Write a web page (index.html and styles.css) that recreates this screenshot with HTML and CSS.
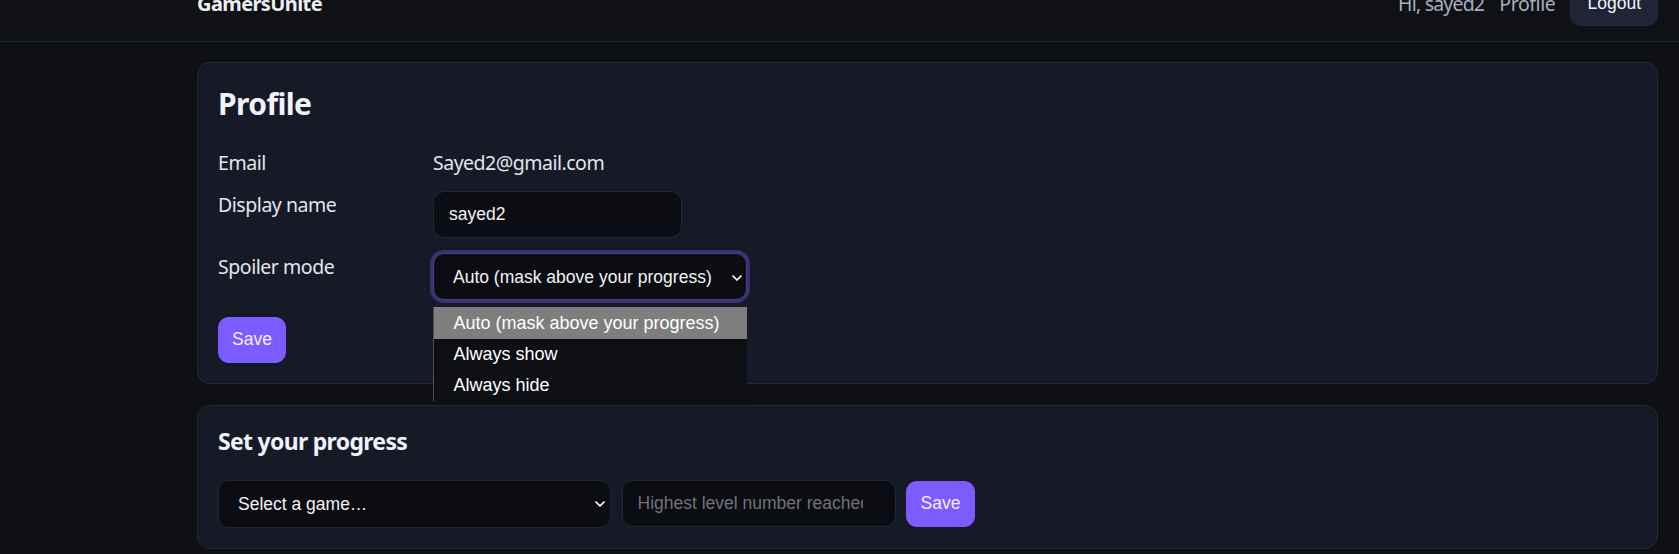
FILE: index.html
```html
<!DOCTYPE html>
<html lang="en">
<head>
<meta charset="utf-8">
<title>Profile – GamersUnite</title>
<link rel="stylesheet" href="styles.css">
</head>
<body>
<header class="topbar">
  <div class="topbar-inner">
    <span class="brand">GamersUnite</span>
    <nav class="nav">
      <span class="greet">Hi, sayed2</span>
      <a class="nav-link" href="#">Profile</a>
      <button class="btn-ghost" type="button">Logout</button>
    </nav>
  </div>
</header>
<main class="main">
  <section class="card profile-card">
    <h1 class="card-title">Profile</h1>
    <div class="form">
      <div class="row row-email">
        <span class="label">Email</span>
        <span class="value">Sayed2@gmail.com</span>
      </div>
      <div class="row">
        <label class="label" for="dn">Display name</label>
        <input id="dn" class="input input-name" type="text" value="sayed2">
      </div>
      <div class="row">
        <label class="label" for="sm">Spoiler mode</label>
        <div class="select-wrap spoiler">
          <select id="sm" class="select select-focus">
            <option>Auto (mask above your progress)</option>
            <option>Always show</option>
            <option>Always hide</option>
          </select>
          <svg class="chev" width="10" height="6" viewBox="0 0 10 6"><path d="M1 1l4 4 4-4" fill="none" stroke="#ffffff" stroke-width="1.7" stroke-linecap="round" stroke-linejoin="round"/></svg>
          <div class="dropdown">
            <div class="opt opt-active">Auto (mask above your progress)</div>
            <div class="opt">Always show</div>
            <div class="opt">Always hide</div>
          </div>
        </div>
      </div>
      <div class="actions">
        <button class="btn-primary" type="button">Save</button>
      </div>
    </div>
  </section>
  <section class="card progress-card">
    <h2 class="card-subtitle">Set your progress</h2>
    <div class="progress-row">
      <div class="select-wrap game">
        <select class="select select-game">
          <option>Select a game…</option>
        </select>
        <svg class="chev" width="10" height="6" viewBox="0 0 10 6"><path d="M1 1l4 4 4-4" fill="none" stroke="#ffffff" stroke-width="1.7" stroke-linecap="round" stroke-linejoin="round"/></svg>
      </div>
      <input class="input input-level" type="number" placeholder="Highest level number reached">
      <button class="btn-primary" type="button">Save</button>
    </div>
  </section>
</main>
</body>
</html>
```
FILE: styles.css
```css
* { box-sizing: border-box; }

html, body { height: 100%; }

body {
  margin: 0;
  background: #0e1014;
  color: #e3e6ed;
  font-family: "Segoe UI", "Noto Sans", "Open Sans", sans-serif;
  font-size: 20px;
  line-height: 1.5;
  overflow: hidden;
}

.topbar {
  margin-top: -34px;
  background: #0f1115;
  border-bottom: 1px solid #1e2830;
}

.topbar-inner {
  display: flex;
  align-items: center;
  justify-content: space-between;
  padding: 15px 21px 15px 197px;
}

.brand {
  font-weight: 700;
  font-size: 20px;
  letter-spacing: -0.6px;
  color: #eceef4;
}

.nav {
  display: flex;
  align-items: center;
  gap: 15px;
  color: #a9afbc;
  font-size: 19.5px;
  letter-spacing: -0.4px;
}

.greet {
  letter-spacing: -0.8px;
}

.nav-link {
  color: #a9afbc;
  text-decoration: none;
}

.btn-ghost {
  font-family: "Liberation Sans", Arial, sans-serif;
  font-size: 17.5px;
  letter-spacing: 0;
  height: 45px;
  padding: 0 16px;
  border: 1px solid #242a3e;
  background: #1f2437;
  color: #f3f4f7;
  border-radius: 11px;
}

.main {
  display: flex;
  flex-direction: column;
  gap: 21px;
  padding: 20px 21px 4px 197px;
}

.card {
  background: #161a26;
  border: 1px solid #222a3c;
  border-radius: 13px;
  padding: 20px;
}

.card-title {
  margin: 0 0 23.7px;
  font-size: 30px;
  line-height: 42px;
  font-weight: 700;
  letter-spacing: -0.6px;
  color: #f0f2f8;
}

.card-subtitle {
  margin: -1.5px 0 21.5px;
  font-size: 23px;
  line-height: 34px;
  font-weight: 700;
  letter-spacing: -0.7px;
  color: #f0f2f8;
}

.form {
  display: flex;
  flex-direction: column;
  gap: 15px;
}

.row {
  display: flex;
  align-items: flex-start;
}

.row-email {
  line-height: 27px;
}

.label {
  width: 215px;
  flex: none;
  color: #e3e6ed;
  font-size: 19.5px;
  letter-spacing: -0.45px;
  line-height: 27px;
}

.value {
  color: #e3e6ed;
  font-size: 19.5px;
  letter-spacing: -0.5px;
}

.input,
.select {
  font-family: "Liberation Sans", Arial, sans-serif;
  font-size: 17.5px;
  color: #f2f2f4;
  background: #0b0d12;
  border: 1px solid #1f2738;
  border-radius: 11px;
  outline: none;
}

.input {
  height: 47px;
  padding: 0 15px;
}

.input::placeholder {
  color: #707279;
}

.input-name {
  width: 249px;
}

.input-level {
  width: 274px;
  padding-right: 32px;
  -moz-appearance: textfield;
}

.input-level::-webkit-outer-spin-button,
.input-level::-webkit-inner-spin-button {
  -webkit-appearance: none;
  margin: 0;
}

.select-wrap {
  position: relative;
  flex: none;
}

.select {
  -webkit-appearance: none;
  appearance: none;
  display: block;
  width: 100%;
  padding: 0 30px 0 19px;
}

.spoiler {
  width: 314px;
  margin-top: 0.5px;
}

.select-focus {
  height: 47px;
  border-color: #4a3e93;
  box-shadow: 0 0 0 3px #3a3173;
}

.game {
  width: 393px;
}

.select-game {
  height: 48px;
}

.chev {
  position: absolute;
  pointer-events: none;
}

.spoiler .chev {
  right: 5px;
  top: 22px;
}

.game .chev {
  right: 6px;
  top: 21px;
}

.dropdown {
  position: absolute;
  left: 0;
  top: calc(100% + 6.5px);
  width: 100%;
  background: #0d0f14;
  border-left: 1px solid #4b4d52;
  z-index: 5;
  font-family: "Liberation Sans", Arial, sans-serif;
  font-size: 18px;
  color: #ffffff;
}

.opt {
  height: 31px;
  line-height: 31px;
  padding-left: 19.5px;
  white-space: nowrap;
}

.opt-active {
  height: 32px;
  line-height: 32px;
  background: #7e7e7e;
}

.actions {
  margin-top: 2px;
  display: flex;
}

.btn-primary {
  font-family: "Liberation Sans", Arial, sans-serif;
  font-size: 17.5px;
  height: 45.5px;
  padding: 0 14px;
  border: none;
  border-radius: 11px;
  background: #7c5cff;
  color: #f3f1ff;
}

.progress-row {
  display: flex;
  align-items: center;
  gap: 10.5px;
}

.progress-row .btn-primary {
  width: 69px;
  height: 46px;
}
```
